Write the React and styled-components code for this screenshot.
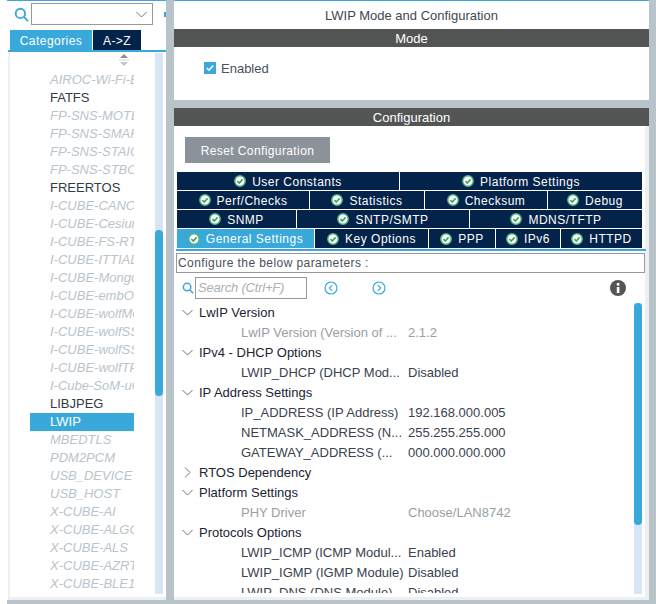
import React from 'react'
import styled, { createGlobalStyle } from 'styled-components'

const blue = '#39a9dc'
const navy = '#03234b'
const steel = '#b8c4ca'

const GlobalStyle = createGlobalStyle`
  html, body {
    margin: 0;
    padding: 0;
    background: #fff;
    overflow: hidden;
    font-family: "Liberation Sans", Arial, sans-serif;
  }
`

const Page = styled.div`
  width: 656px;
  height: 604px;
  display: flex;
  background: #fff;
  overflow: hidden;
`
const Sidebar = styled.aside`
  width: 159px;
  height: 604px;
  box-sizing: border-box;
  margin-left: 7px;
  display: flex;
  flex-direction: column;
  border-top: 1px solid ${blue};
  border-bottom: 4px solid ${steel};
`
const ComboRow = styled.div`
  display: flex;
  align-items: flex-start;
  padding-top: 2px;
  box-sizing: border-box;
  position: relative;
  height: 29px;
  flex: none;
`
const SearchGlyph = styled.svg`
  flex: none;
  display: block;
  margin-left: ${(p) => p.$left || 0}px;
  margin-top: ${(p) => p.$top || 0}px;
`
const Combo = styled.div`
  width: 122px;
  height: 22px;
  margin-left: 2px;
  box-sizing: border-box;
  border: 1px solid #999;
  background: #fff;
  display: flex;
  align-items: center;
  justify-content: flex-end;
  padding-right: 5px;
`
const EdgeDot = styled.div`
  position: absolute;
  right: 0;
  top: 11px;
  width: 2px;
  height: 5px;
  background: ${blue};
`
const SideTabs = styled.div`
  display: flex;
  padding-left: 3px;
  gap: 1px;
  height: 20px;
  flex: none;
`
const SideTab = styled.div`
  width: ${(p) => p.$w}px;
  box-sizing: border-box;
  padding-top: 1px;
  background: ${(p) => (p.$active ? blue : navy)};
  color: #fff;
  font-size: 12px;
  letter-spacing: 0.45px;
  display: flex;
  align-items: center;
  justify-content: center;
`
const SideRule = styled.div`
  height: 2px;
  margin-left: 1px;
  background: ${blue};
  flex: none;
`
const ListArea = styled.div`
  flex: 1;
  min-height: 0;
  margin-left: 1px;
  border-left: 2px solid #edf0f2;
  border-bottom: 3px solid #edf0f2;
  box-sizing: border-box;
  position: relative;
  padding: 19px 0 0 20px;
  overflow: hidden;
`
const SortGlyph = styled.svg`
  position: absolute;
  left: 109px;
  top: 2px;
`
const ListItem = styled.div`
  width: 104px;
  height: 18px;
  line-height: 18px;
  padding-left: 20px;
  box-sizing: border-box;
  font-size: 13px;
  white-space: nowrap;
  overflow: hidden;
  font-style: ${(p) => (p.$off ? 'italic' : 'normal')};
  color: ${(p) => (p.$selected ? '#fff' : p.$off ? '#b9c4cc' : '#333b45')};
  background: ${(p) => (p.$selected ? blue : 'transparent')};
`
const Scroll = styled.div`
  position: absolute;
  width: 8px;
  background: #d6e6f4;
  right: ${(p) => p.$right}px;
  top: ${(p) => p.$top}px;
  bottom: ${(p) => p.$bottom}px;
`
const Thumb = styled.div`
  position: absolute;
  left: 0;
  right: 0;
  top: ${(p) => p.$top}px;
  height: ${(p) => p.$h}px;
  background: ${blue};
  border-radius: 4px;
`
const Gutter = styled.div`
  width: 8px;
  flex: none;
  background: ${steel};
`
const RightStrip = styled.div`
  width: 7px;
  flex: none;
  background: ${steel};
`
const Main = styled.main`
  width: 475px;
  flex: none;
  display: flex;
  flex-direction: column;
  border-top: 1px solid ${blue};
  border-bottom: 4px solid ${steel};
  box-sizing: border-box;
  height: 604px;
`
const Title = styled.div`
  height: 28px;
  line-height: 30px;
  text-align: center;
  font-size: 13px;
  color: #3f4753;
  flex: none;
`
const SectionHead = styled.div`
  height: 18px;
  line-height: 20px;
  background: #535554;
  color: #fff;
  text-align: center;
  font-size: 13px;
  flex: none;
`
const ModeBody = styled.div`
  height: 53px;
  display: flex;
  align-items: flex-start;
  padding: 14px 0 0 30px;
  box-sizing: border-box;
  gap: 5px;
  font-size: 13px;
  line-height: 15px;
  color: #4a4f5c;
  flex: none;
`
const Check = styled.div`
  width: 12px;
  height: 12px;
  margin-top: 1px;
  background: ${blue};
  display: flex;
  align-items: center;
  justify-content: center;
`
const Separator = styled.div`
  height: 8px;
  background: ${steel};
  flex: none;
`
const ConfigBody = styled.div`
  flex: 1;
  min-height: 0;
  display: flex;
  flex-direction: column;
  position: relative;
  border-bottom: 3px solid #edf0f2;
  border-right: 4px solid #edf0f2;
`
const ResetButton = styled.div`
  width: 145px;
  height: 26px;
  box-sizing: border-box;
  padding-top: 1px;
  margin: 11px 0 9px 11px;
  background: #8c9299;
  color: #fff;
  font-size: 12px;
  letter-spacing: 0.4px;
  display: flex;
  align-items: center;
  justify-content: center;
  flex: none;
`
const TabRows = styled.div`
  display: flex;
  flex-direction: column;
  gap: 1px;
  margin-left: 3px;
  width: 465px;
  flex: none;
`
const TabRow = styled.div`
  display: grid;
  grid-template-columns: ${(p) => p.$cols};
  gap: 1px;
  height: ${(p) => p.$h || 18}px;
`
const Tab = styled.div`
  background: ${(p) => (p.$active ? blue : navy)};
  color: #fff;
  font-size: 12px;
  letter-spacing: 0.5px;
  display: flex;
  align-items: center;
  justify-content: center;
  gap: 6px;
  white-space: nowrap;
  overflow: hidden;
`
const TabLabel = styled.span`
  padding-top: 1px;
`
const TabRule = styled.div`
  height: 2px;
  margin: 1px 0 0 2px;
  width: 470px;
  background: ${blue};
  flex: none;
`
const ParamBox = styled.div`
  width: 469px;
  height: 20px;
  margin: 2px 0 0 2px;
  box-sizing: border-box;
  border: 1px solid #999;
  font-size: 12px;
  letter-spacing: 0.42px;
  line-height: 19px;
  padding-left: 1px;
  color: #4a4f5c;
  flex: none;
`
const Tools = styled.div`
  height: 22px;
  margin-top: 4px;
  display: flex;
  align-items: center;
  padding-left: 8px;
  flex: none;
`
const SearchBox = styled.div`
  width: 112px;
  height: 22px;
  margin-left: 1px;
  box-sizing: border-box;
  border: 1px solid #999;
  font-size: 13px;
  letter-spacing: -0.2px;
  font-style: italic;
  color: #aab0b6;
  line-height: 20px;
  padding-left: 2px;
`
const NavIcon = styled.svg`
  margin-left: ${(p) => p.$gap}px;
  flex: none;
`
const InfoIcon = styled.svg`
  margin-left: 224px;
  flex: none;
`
const Tree = styled.div`
  flex: 1;
  min-height: 0;
  overflow: hidden;
  margin: 3px 11px 4px 0;
`
const Group = styled.div`
  height: 20px;
  display: flex;
  align-items: center;
  padding-left: 8px;
  gap: 6px;
  font-size: 13px;
  color: #1a2433;
  white-space: nowrap;
`
const ChevronIcon = styled.svg`
  flex: none;
`
const TabCheckIcon = styled.svg`
  flex: none;
`
const Param = styled.div`
  height: 20px;
  display: grid;
  grid-template-columns: 167px auto;
  padding-left: 67px;
  align-items: center;
  font-size: 13px;
  white-space: nowrap;
  color: ${(p) => (p.$off ? '#999ea3' : '#39424e')};
`

const sideItems = [
  ['AIROC-Wi-Fi-Bluetooth', 1],
  ['FATFS'],
  ['FP-SNS-MOTENV1', 1],
  ['FP-SNS-SMARTAG1', 1],
  ['FP-SNS-STAIOTCFT', 1],
  ['FP-SNS-STBOX1', 1],
  ['FREERTOS'],
  ['I-CUBE-CANOPEN', 1],
  ['I-CUBE-Cesium', 1],
  ['I-CUBE-FS-RTOS', 1],
  ['I-CUBE-ITTIADB', 1],
  ['I-CUBE-Mongoose', 1],
  ['I-CUBE-embOS', 1],
  ['I-CUBE-wolfMQTT', 1],
  ['I-CUBE-wolfSSH', 1],
  ['I-CUBE-wolfSSL', 1],
  ['I-CUBE-wolfTPM', 1],
  ['I-Cube-SoM-uGOAL', 1],
  ['LIBJPEG'],
  ['LWIP', 0, 1],
  ['MBEDTLS', 1],
  ['PDM2PCM', 1],
  ['USB_DEVICE', 1],
  ['USB_HOST', 1],
  ['X-CUBE-AI', 1],
  ['X-CUBE-ALGOBUILD', 1],
  ['X-CUBE-ALS', 1],
  ['X-CUBE-AZRTOS', 1],
  ['X-CUBE-BLE1', 1],
  ['X-CUBE-BLE2', 1],
]

const tabRows = [
  { cols: '222px 1fr', tabs: ['User Constants', 'Platform Settings'] },
  { cols: '132px 114px 122px 1fr', tabs: ['Perf/Checks', 'Statistics', 'Checksum', 'Debug'] },
  { cols: '119px 172px 1fr', tabs: ['SNMP', 'SNTP/SMTP', 'MDNS/TFTP'] },
  {
    cols: '137px 113px 66px 64px 1fr',
    h: 19,
    tabs: ['General Settings', 'Key Options', 'PPP', 'IPv6', 'HTTPD'],
  },
]

const tree = [
  { g: 'LwIP Version' },
  { p: 'LwIP Version (Version of ...', v: '2.1.2', off: 1 },
  { g: 'IPv4 - DHCP Options' },
  { p: 'LWIP_DHCP (DHCP Mod...', v: 'Disabled' },
  { g: 'IP Address Settings' },
  { p: 'IP_ADDRESS (IP Address)', v: '192.168.000.005' },
  { p: 'NETMASK_ADDRESS (N...', v: '255.255.255.000' },
  { p: 'GATEWAY_ADDRESS (...', v: '000.000.000.000' },
  { g: 'RTOS Dependency', closed: 1 },
  { g: 'Platform Settings' },
  { p: 'PHY Driver', v: 'Choose/LAN8742', off: 1 },
  { g: 'Protocols Options' },
  { p: 'LWIP_ICMP (ICMP Modul...', v: 'Enabled' },
  { p: 'LWIP_IGMP (IGMP Module)', v: 'Disabled' },
  { p: 'LWIP_DNS (DNS Module)', v: 'Disabled' },
]

function Magnifier({ size, left, top }) {
  return (
    <SearchGlyph $left={left} $top={top} width={size} height={size} viewBox="0 0 16 16" fill="none" stroke={blue} strokeWidth="2">
      <circle cx="6.8" cy="6.8" r="5" />
      <path d="M10.6 10.6 15 15" />
    </SearchGlyph>
  )
}

function TabCheck() {
  return (
    <TabCheckIcon width="12" height="12" viewBox="0 0 12 12">
      <circle cx="6" cy="6" r="5.2" fill="#fff" stroke="#55b47c" strokeWidth="1.5" />
      <path d="M3.4 6.1 5.3 8 8.6 4.4" fill="none" stroke="#3f9e66" strokeWidth="1.6" />
    </TabCheckIcon>
  )
}

function Chevron({ closed }) {
  return (
    <ChevronIcon width="11" height="11" viewBox="0 0 11 11" fill="none" stroke="#6d7378" strokeWidth="1">
      <path d={closed ? 'M3 0.5 8 5.5 3 10.5' : 'M0.5 3 5.5 8 10.5 3'} />
    </ChevronIcon>
  )
}

function NavCircle({ gap, back }) {
  return (
    <NavIcon $gap={gap} width="14" height="14" viewBox="0 0 14 14" fill="none" stroke={blue}>
      <circle cx="7" cy="7" r="6" strokeWidth="1.2" />
      <path d={back ? 'M8.2 4.2 5.4 7l2.8 2.8' : 'M5.8 4.2 8.6 7l-2.8 2.8'} strokeWidth="1.2" />
    </NavIcon>
  )
}

export default function App() {
  return (
    <Page>
      <GlobalStyle />
      <Sidebar>
        <ComboRow>
          <Magnifier size={15} left={7} top={4} />
          <Combo>
            <svg width="11" height="7" viewBox="0 0 11 7" fill="none" stroke="#777" strokeWidth="1">
              <path d="M0.5 1 5.5 6 10.5 1" />
            </svg>
          </Combo>
          <EdgeDot />
        </ComboRow>
        <SideTabs>
          <SideTab $w={82} $active>Categories</SideTab>
          <SideTab $w={48}>A-&gt;Z</SideTab>
        </SideTabs>
        <SideRule />
        <ListArea>
          <SortGlyph width="10" height="13" viewBox="0 0 10 13">
            <path d="M5 0 9 4H1Z" fill="#8c8f92" />
            <path d="M0 6h10" stroke="#d0d3d6" />
            <path d="M5 12 1 8h8Z" fill="#c4c7ca" />
          </SortGlyph>
          {sideItems.map(([name, off, selected]) => (
            <ListItem key={name} $off={off} $selected={selected}>{name}</ListItem>
          ))}
          <Scroll $right={3} $top={1} $bottom={3}>
            <Thumb $top={177} $h={166} />
          </Scroll>
        </ListArea>
      </Sidebar>
      <Gutter />
      <Main>
        <Title>LWIP Mode and Configuration</Title>
        <SectionHead>Mode</SectionHead>
        <ModeBody>
          <Check>
            <svg width="10" height="10" viewBox="0 0 10 10" fill="none" stroke="#fff" strokeWidth="1.6">
              <path d="M1.8 5 4 7.2 8.2 2.6" />
            </svg>
          </Check>
          Enabled
        </ModeBody>
        <Separator />
        <SectionHead>Configuration</SectionHead>
        <ConfigBody>
          <ResetButton>Reset Configuration</ResetButton>
          <TabRows>
            {tabRows.map((row) => (
              <TabRow key={row.tabs[0]} $cols={row.cols} $h={row.h}>
                {row.tabs.map((t) => (
                  <Tab key={t} $active={t === 'General Settings'}>
                    <TabCheck />
                    <TabLabel>{t}</TabLabel>
                  </Tab>
                ))}
              </TabRow>
            ))}
          </TabRows>
          <TabRule />
          <ParamBox>Configure the below parameters :</ParamBox>
          <Tools>
            <Magnifier size={12} />
            <SearchBox>Search (Ctrl+F)</SearchBox>
            <NavCircle gap={17} back />
            <NavCircle gap={34} />
            <InfoIcon width="16" height="16" viewBox="0 0 16 16">
              <circle cx="8" cy="8" r="8" fill="#555" />
              <rect x="6.8" y="7" width="2.6" height="6" fill="#fff" />
              <rect x="6.8" y="3" width="2.6" height="2.6" fill="#fff" />
            </InfoIcon>
          </Tools>
          <Tree>
            {tree.map((row) =>
              row.g ? (
                <Group key={row.g}>
                  <Chevron closed={row.closed} />
                  {row.g}
                </Group>
              ) : (
                <Param key={row.p} $off={row.off}>
                  <span>{row.p}</span>
                  <span>{row.v}</span>
                </Param>
              )
            )}
          </Tree>
          <Scroll $right={3} $top={177} $bottom={3}>
            <Thumb $top={0} $h={222} />
          </Scroll>
        </ConfigBody>
      </Main>
      <RightStrip />
    </Page>
  )
}
